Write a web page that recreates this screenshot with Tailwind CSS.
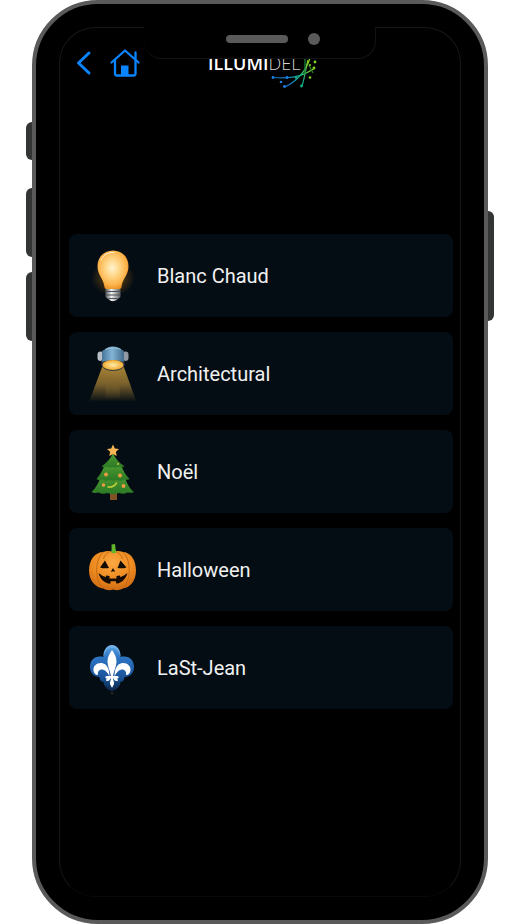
<!DOCTYPE html>
<html lang="fr">
<head>
  <meta charset="UTF-8">
  <meta name="viewport" content="width=device-width, initial-scale=1.0">
  <title>Illumidel</title>
  <script src="https://cdn.jsdelivr.net/npm/@tailwindcss/browser@4"></script>
</head>
<body class="bg-white font-['Roboto',sans-serif]">
  <div class="relative mx-8 flex min-h-screen rounded-[66px] border-4 border-[#5a5a5a] bg-black p-[23px]">
    <!-- side keys -->
    <span class="absolute top-[118px] -left-[10px] h-[38px] w-[6px] rounded-l-md bg-[#333534]"></span>
    <span class="absolute top-[184px] -left-[10px] h-[69px] w-[6px] rounded-l-md bg-[#333534]"></span>
    <span class="absolute top-[268px] -left-[10px] h-[69px] w-[6px] rounded-l-md bg-[#333534]"></span>
    <span class="absolute top-[207px] -right-[10px] h-[110px] w-[6px] rounded-r-md bg-[#333534]"></span>

    <div class="relative flex-1 rounded-[36px] border border-[#171717] border-b-[#080808]">
      <!-- notch -->
      <div class="absolute -top-px left-1/2 z-10 flex h-8 w-[232px] -translate-x-1/2 items-start gap-5 rounded-b-[18px] border-r border-b border-[#131313] bg-black pt-[6px] pl-[82px]">
        <span class="mt-[2px] h-2 w-[62px] rounded-full bg-[#5a5a5a]"></span>
        <span class="size-3 rounded-full bg-[#5a5a5a]"></span>
      </div>

      <header class="grid grid-cols-[1fr_auto_1fr] items-center pt-5 pr-[10px] pl-4">
        <nav class="flex items-center gap-[18px]">
          <button type="button" aria-label="Retour" class="cursor-pointer">
            <svg class="h-[30px] w-4" viewBox="0 0 16 30" fill="none" stroke="#0a84ff" stroke-width="3" stroke-linecap="round" stroke-linejoin="round">
              <path d="M13 5 2.5 15 13 25"/>
            </svg>
          </button>
          <a href="#" aria-label="Accueil">
            <svg class="size-[30px]" viewBox="0 0 30 30" fill="none" stroke="#0a84ff" stroke-width="2.3" stroke-linecap="round" stroke-linejoin="round">
              <path d="M1.5 14.5 15 2.5l13.500 12"/>
              <path d="M5 12v13.500a2 2 0 0 0 2 2h16.500a2 2 0 0 0 2-2V4.500"/>
              <path fill="#0a84ff" stroke="none" d="M11 17.500h7.500V28H11z"/>
            </svg>
          </a>
        </nav>
        <div class="relative w-[110px] font-['Open_Sans',sans-serif] text-lg leading-[30px] whitespace-nowrap text-white">
          <span class="font-semibold">ILLUMI</span><span class="font-light text-[#d4d4d4]">DEL</span>
          <svg class="absolute top-[9px] right-0 h-8 w-12" viewBox="0 0 48 32" fill="none">
            <defs>
              <linearGradient id="ray" gradientUnits="userSpaceOnUse" x1="4" y1="26" x2="44" y2="6">
                <stop offset="0.3" stop-color="#1472c4"/>
                <stop offset="0.6" stop-color="#15b38a"/>
                <stop offset="0.9" stop-color="#8bd61e"/>
              </linearGradient>
            </defs>
            <g stroke="url(#ray)" stroke-width="1.2">
              <path d="M2 20.500c14 1 28 1 42-9"/>
              <path d="M15 30C27 24 36 14 40 1"/>
              <path d="M32 29c3-9 3-15 6-26"/>
              <path d="M35 2v16" stroke="#14863f"/>
              <path d="M39 8l4 8" stroke="#2f7d24"/>
            </g>
            <g fill="#1680e8">
              <circle cx="3" cy="20.500" r="1.400"/>
              <circle cx="17" cy="20.500" r="1.400"/>
              <circle cx="11" cy="25" r="1.300"/>
              <circle cx="14.500" cy="29.500" r="1.400"/>
            </g>
            <g fill="#14b58c">
              <circle cx="26" cy="20.500" r="1.200"/>
              <circle cx="31.500" cy="29" r="1.400"/>
            </g>
            <g fill="#7fd321">
              <circle cx="45" cy="5" r="1.400"/>
              <circle cx="44" cy="11" r="1.400"/>
              <circle cx="40" cy="20.500" r="1.300"/>
              <circle cx="40" cy="8" r="1.100"/>
            </g>
          </svg>
        </div>
      </header>

      <ul class="mt-39 flex flex-col gap-[15px] pr-[7px] pl-[9px]">
        <li>
          <button type="button" class="flex h-[83px] w-full cursor-pointer items-center gap-4 rounded-lg bg-[#040d14] px-4 text-left text-xl text-[#f1f1f1]">
            <svg class="size-14 shrink-0" viewBox="0 0 56 56">
              <defs>
                <radialGradient id="glass" cx="0.48" cy="0.45" r="0.6">
                  <stop offset="0" stop-color="#fff3d0"/>
                  <stop offset="0.35" stop-color="#ffd88c"/>
                  <stop offset="0.75" stop-color="#fcb34a"/>
                  <stop offset="1" stop-color="#e58a18"/>
                </radialGradient>
                <radialGradient id="glow">
                  <stop offset="0.4" stop-color="#8a5a14" stop-opacity="0.5"/>
                  <stop offset="1" stop-color="#8a5a14" stop-opacity="0"/>
                </radialGradient>
                <linearGradient id="metal">
                  <stop offset="0" stop-color="#50545a"/>
                  <stop offset="0.4" stop-color="#f0f1f2"/>
                  <stop offset="1" stop-color="#55585d"/>
                </linearGradient>
              </defs>
              <ellipse cx="28" cy="30" rx="22" ry="18" fill="url(#glow)"/>
              <path fill="url(#glass)" d="M28 2.500c-9 0-15.500 6.500-15.500 15.500 0 9.500 6 12 7 21 .2 1.600 1 2 2.500 2h12c1.500 0 2.300-.4 2.500-2 1-9 7-11.500 7-21C43.500 9 37 2.500 28 2.500z"/>
              <path d="M16 12c2-5 7-8 13-7.500" fill="none" stroke="#fff3d2" stroke-width="1" stroke-linecap="round"/>
              <path fill="url(#metal)" d="M20.500 41h15v8l-4 3c-1 1.500-6 1.500-7 0l-4-3z"/>
              <path d="M20.500 43.500h15M20.500 47h15M23.500 50.500h9" stroke="#4b4f55" stroke-width="1.200"/>
            </svg>
            Blanc Chaud
          </button>
        </li>
        <li>
          <button type="button" class="flex h-[83px] w-full cursor-pointer items-center gap-4 rounded-lg bg-[#040d14] px-4 text-left text-xl text-[#f1f1f1]">
            <svg class="size-14 shrink-0" viewBox="0 0 56 56">
              <defs>
                <linearGradient id="beam" x2="0" y2="1">
                  <stop offset="0" stop-color="#a98435"/>
                  <stop offset="0.5" stop-color="#79602c"/>
                  <stop offset="1" stop-color="#79602c" stop-opacity="0"/>
                </linearGradient>
                <linearGradient id="dome">
                  <stop offset="0" stop-color="#46759a"/>
                  <stop offset="0.45" stop-color="#84b5d6"/>
                  <stop offset="1" stop-color="#416b8a"/>
                </linearGradient>
                <radialGradient id="lens">
                  <stop offset="0" stop-color="#ffedaa"/>
                  <stop offset="1" stop-color="#f0a92f"/>
                </radialGradient>
              </defs>
              <path fill="url(#beam)" d="M17.500 20h21L51.500 56H4z"/>
              <path fill="url(#beam)" opacity="0.600" d="M22 22h12l1 32H20z"/>
              <rect x="12.500" y="5.500" width="6" height="9.500" rx="3" fill="#b8bec5"/>
              <rect x="37.500" y="5.500" width="6" height="9.500" rx="3" fill="#9299a2"/>
              <path fill="#353b43" d="M16.500 14h23v5a11.500 6 0 0 1-23 0z"/>
              <path fill="url(#dome)" d="M17 16V6c0-1.500 1-2 3-2.500C22 1.500 24 .5 28 .5s6 1 8 3c2 .5 3 1 3 2.500v10c-5-2.500-17-2.500-22 0z"/>
              <path d="M20 3.500c5-2 11-2 16 0" fill="none" stroke="#9bc3dd" stroke-width="1"/>
              <ellipse cx="28" cy="19" rx="10.500" ry="5" fill="url(#lens)"/>
            </svg>
            Architectural
          </button>
        </li>
        <li>
          <button type="button" class="flex h-[83px] w-full cursor-pointer items-center gap-4 rounded-lg bg-[#040d14] px-4 text-left text-xl text-[#f1f1f1]">
            <svg class="size-14 shrink-0" viewBox="0 0 56 56">
              <defs>
                <linearGradient id="leaf" x2="0" y2="1">
                  <stop offset="0" stop-color="#4f9a30"/>
                  <stop offset="1" stop-color="#2b7a25"/>
                </linearGradient>
              </defs>
              <path fill="#825126" d="M25 47h7v9h-7z"/>
              <path fill="url(#leaf)" d="M17 30C14 38 11 44 6.500 48c3 1.500 5 1 7 .5 3 1.500 6 1.500 8.500 .5 4 1.500 8 1.500 12 0 3 1 6 1 8.500-.5 2.500.5 4.500.5 6.500-.5-5-4-8-10-10-18z"/>
              <path fill="url(#leaf)" d="M20 20c-2 6-5 11-8.500 15 2 1.500 4 1.500 6 .5 2.500 1.500 5 1.500 7 .5 2.500 1 5 1 7 0 2.500 1 5 1 7-.5 2 .5 4.500.5 6-.5-4-4-7-9-8.500-15z"/>
              <path fill="url(#leaf)" d="M28 9c-2 5-6 10-11.500 13.500 2 .8 4 .8 5.500 .2 2 1 4 1 6 .3 2 .7 4 .7 6-.3 2 .6 3.500.6 5.500-.2C34 19 30 14 28 9z"/>
              <path fill="none" stroke="#c5cf3a" stroke-width="1.500" stroke-linecap="round" d="M23 43c4 .5 7-1.500 8.500-4"/>
              <g fill="#f29a45">
                <circle cx="21" cy="30.500" r="1.900"/>
                <circle cx="35" cy="31.500" r="1.900"/>
                <circle cx="18.500" cy="41" r="1.700"/>
                <circle cx="38.500" cy="42" r="1.900"/>
                <circle cx="33" cy="20" r="1" fill="#d7bf3e"/>
              </g>
              <path fill="#f9b553" d="m28 .5 1.800 3.900 4.200.5-3.100 2.900.8 4.200-3.700-2-3.700 2 .8-4.200L22 4.900l4.200-.5z"/>
            </svg>
            Noël
          </button>
        </li>
        <li>
          <button type="button" class="flex h-[83px] w-full cursor-pointer items-center gap-4 rounded-lg bg-[#040d14] px-4 text-left text-xl text-[#f1f1f1]">
            <svg class="size-14 shrink-0" viewBox="0 0 56 56">
              <defs>
                <radialGradient id="rind" cx="0.5" cy="0.3" r="0.7">
                  <stop offset="0" stop-color="#fba842"/>
                  <stop offset="0.6" stop-color="#ee8b20"/>
                  <stop offset="1" stop-color="#cf6c14"/>
                </radialGradient>
              </defs>
              <path fill="url(#rind)" d="M28 10c3-1.500 7-1.500 9.500 0C45.500 10 51 18 51 28.500S45 46 37.500 46.500c-2.500 2-6.500 2-9.500 1-3 1-7 1-9.500-1C11 46 4 39 4 28.500S10 10 18.500 10C21 8.500 25 8.500 28 10z"/>
              <path fill="none" stroke="#c86a14" stroke-width="1" d="M18.500 10C10 16 9 38 18 46.500M37.500 10c8.500 6 9.500 28 0 36.500M24 10c-3 2-5 4-5.500 7M32 10c3 2 5 4 5.500 7"/>
              <path fill="#63b52c" d="M26 10.500c1-3 .5-5 .5-8l3.500-.5c.5 3 .5 6 1.500 8.500-1.500 1-4 1-5.500 0z"/>
              <g fill="#140b05">
                <path d="M20 18.500 15 25.500c3 1 6 1 9 .5z"/>
                <path d="M35.500 18.500 41.500 25.500c-3 1-6 1-9 .5z"/>
                <path d="m28 26-2.200 4 2.200-.7 2.200.7z"/>
                <path d="M13.500 31c3 2.500 5 3.500 7.500 4v-1.500l3.500.5v2.500h7v-2.500l3.500-.5V35c2.500-.5 4.500-1.500 7.500-4-1.500 5.500-5 9-9.500 10.500l-2-.3v-2h-5.500v2.600C19.500 41.500 15 37 13.500 31z"/>
              </g>
            </svg>
            Halloween
          </button>
        </li>
        <li>
          <button type="button" class="flex h-[83px] w-full cursor-pointer items-center gap-4 rounded-lg bg-[#040d14] px-4 text-left text-xl text-[#f1f1f1]">
            <svg class="size-14 shrink-0" viewBox="0 0 56 56">
              <defs>
                <linearGradient id="crest" x2="0" y2="1">
                  <stop offset="0" stop-color="#5ba5e6"/>
                  <stop offset="0.3" stop-color="#2a72c0"/>
                  <stop offset="0.7" stop-color="#1a549a"/>
                  <stop offset="1" stop-color="#0a2140"/>
                </linearGradient>
              </defs>
              <path fill="url(#crest)" d="M27 5c-5 0-9 5-8.500 12C10 15 5 20 5 27c0 6 4 10 9.500 10 0 3 1.500 4.500 4 5 0 4 4 8 8.500 9.500 4.500-1.500 8.500-5.500 8.500-9.500 2.500-.5 4-2 4-5C45 37 49 33 49 27c0-7-5-12-13.500-10C36 10 32 5 27 5z"/>
              <path fill="#9bcaf5" opacity="0.400" d="M27 5c-5 0-9 5-8.500 12 2-6 4-9 8.500-9s6.500 3 8.500 9C36 10 32 5 27 5z"/>
              <g fill="#ffffff">
                <path d="M27 10c-2.500 4-4.500 7-4.500 11.500 0 5 2.700 9 3.500 15h2c.8-6 3.500-10 3.500-15C31.500 17 29.500 14 27 10z"/>
                <path d="M24.500 36.500c0-7.500-2.500-13-8-13.500-5-.3-8.500 3-8 7.500.3 2.500 2 4.500 4.500 4.500-.8-3.500 1.500-6 4.500-5.500 3 .4 5 3 7 7z"/>
                <path d="M29.500 36.500c0-7.500 2.500-13 8-13.500 5-.3 8.500 3 8 7.500-.3 2.500-2 4.500-4.500 4.500.8-3.500-1.500-6-4.500-5.500-3 .4-5 3-7 7z"/>
                <rect x="20.500" y="36" width="13" height="2.500" rx="1.200"/>
                <path d="M25.500 38c-.5 2.500-2.500 4-4.500 2.500 0-1.500 1-2.500 2.500-2.500zM28.500 38c.5 2.500 2.500 4 4.500 2.500 0-1.500-1-2.500-2.500-2.500zM26 38h2c0 2.500 1.500 4 1 6-.5 1.500-1.500 2.500-2 4-.5-1.500-1.500-2.500-2-4-.5-2 1-3.500 1-6z"/>
              </g>
              <circle cx="27" cy="53" r="1.500" fill="#22262b"/>
            </svg>
            LaSt-Jean
          </button>
        </li>
      </ul>
    </div>
  </div>
</body>
</html>
